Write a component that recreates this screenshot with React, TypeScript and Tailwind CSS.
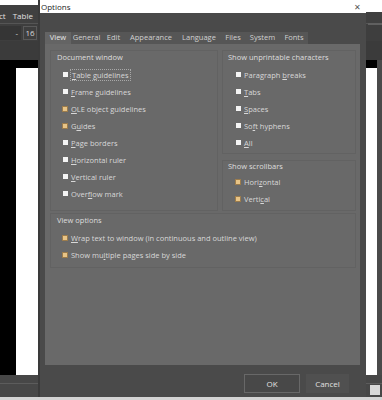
import React from "react";

function Box({ checked }: { checked?: boolean }) {
  return checked ? (
    <span className="inline-block w-[6px] h-[6px] shrink-0 bg-[#e8c486] border border-[#9c7c4c]" />
  ) : (
    <span className="inline-block w-[5px] h-[5px] shrink-0 bg-[#f4f4f4] mx-[0.5px]" />
  );
}

function Item({
  children,
  checked,
  focus,
  h = "h-[17px]",
}: {
  children: React.ReactNode;
  checked?: boolean;
  focus?: boolean;
  h?: string;
}) {
  return (
    <div className={`flex items-center gap-[1px] ${h}`}>
      <Box checked={checked} />
      <span
        className={
          focus
            ? "ml-[1px] border border-dotted border-[#a8a8a8] px-[1px] leading-[10px]"
            : "px-[2px] leading-[10px]"
        }
      >
        {children}
      </span>
    </div>
  );
}

function U({ children }: { children: React.ReactNode }) {
  return <span className="underline underline-offset-[1px]">{children}</span>;
}

export default function App() {
  const tabs: [string, string][] = [
    ["View", "w-[26px]"],
    ["General", "w-[31px]"],
    ["Edit", "w-[23px]"],
    ["Appearance", "w-[52px]"],
    ["Language", "w-[44px]"],
    ["Files", "w-[24px]"],
    ["System", "w-[35px]"],
    ["Fonts", "w-[28px]"],
  ];
  return (
    <div className="relative w-[382px] h-[400px] overflow-hidden bg-[#3c3c3c] font-['Open_Sans',sans-serif] text-[7.5px] text-[#d8d8d8]">
      {/* background application */}
      <div className="flex flex-col h-full">
        <div className="h-[5px] bg-white" />
        <div className="h-[18px] bg-[#404040] flex items-end pb-[1px] text-[8px] text-[#e0e0e0]">
          <span className="ml-[-1px]">ct</span>
          <span className="ml-[7px]">Table</span>
        </div>
        <div className="h-[1px] bg-[#555]" />
        <div className="h-[17px] bg-[#3e3e3e] flex items-center text-[8px]">
          <div className="w-[21px] h-[14px] flex items-center justify-end pr-[3px] bg-[#353535]">-</div>
          <div className="ml-[2px] w-[14px] h-[14px] border border-[#5a5a5a] flex items-center justify-center">16</div>
        </div>
        <div className="h-[19px] bg-[#3b3b3b]" />
        <div className="h-[315px] bg-black flex">
          <div className="ml-[16px] mt-[8px] w-[361px] bg-white" />
          <div className="flex-1 bg-[#4a4a4a]" />
        </div>
        <div className="flex-1 bg-[#474747] flex flex-col relative">
          <div className="mt-[8px] h-[1px] bg-[#5c5c5c]" />
          <div className="absolute right-[2px] top-[10px] w-[10px] h-[10px] bg-[#d8d8d8]" />
        </div>
      </div>

      {/* top strip right of dialog */}
      <div className="absolute right-0 top-0 w-[16px] h-[12px] bg-white" />
      <div className="absolute right-0 top-[23px] w-[14px] h-[2px] bg-[#606060]" />

      {/* dialog */}
      <div className="absolute left-[38px] top-0 w-[328px] h-[397px] flex flex-col bg-[#4a4a4a] border-l-2 border-[#3a3a3a]">
        <div className="h-[13px] bg-white flex items-center justify-between pl-[1px] pr-[5px] text-[#1e1e1e] text-[8px]">
          <span>Options</span>
          <span className="text-[#555] text-[8px]">✕</span>
        </div>
        <div className="flex-1 flex flex-col pl-[5px] pr-[6px] pt-[19px]">
          <div className="flex h-[12px]">
            {tabs.map(([t, w], i) => (
              <div
                key={t}
                className={`${w} h-full flex items-center justify-center ${
                  i === 0 ? "bg-[#646464] text-[#e6e6e6]" : "bg-[#565656] text-[#d0d0d0]"
                }`}
              >
                {t}
              </div>
            ))}
          </div>
          <div className="h-[321px] bg-[#696969] pl-[5px] pr-[4px] pt-[6px] flex flex-col">
            <div className="flex gap-[4px]">
              <div className="w-[168px] h-[161px] border border-[#626262] flex flex-col">
                <div className="h-[13px] leading-[13px] pl-[6px] text-[#dedede]">Document window</div>
                <div className="mt-[2px] pl-[11px]">
                  <Item focus><U>T</U>able guidelines</Item>
                  <Item><U>F</U>rame guidelines</Item>
                  <Item checked><U>O</U>LE object guidelines</Item>
                  <Item checked>G<U>u</U>ides</Item>
                  <Item><U>P</U>age borders</Item>
                  <Item><U>H</U>orizontal ruler</Item>
                  <Item><U>V</U>ertical ruler</Item>
                  <Item>Over<U>f</U>low mark</Item>
                </div>
              </div>
              <div className="w-[134px] flex flex-col gap-[6px]">
                <div className="h-[104px] border border-[#626262] flex flex-col">
                  <div className="h-[13px] leading-[13px] pl-[5px] text-[#dedede]">Show unprintable characters</div>
                  <div className="mt-[2px] pl-[12px]">
                    <Item>Paragraph <U>b</U>reaks</Item>
                    <Item><U>T</U>abs</Item>
                    <Item><U>S</U>paces</Item>
                    <Item>So<U>f</U>t hyphens</Item>
                    <Item><U>A</U>ll</Item>
                  </div>
                </div>
                <div className="h-[51px] border border-[#626262] flex flex-col">
                  <div className="h-[11px] leading-[11px] pl-[5px] text-[#dedede]">Show scrollbars</div>
                  <div className="mt-[2px] pl-[12px]">
                    <Item checked h="h-[16.5px]">Hori<U>z</U>ontal</Item>
                    <Item checked h="h-[16.5px]">Verti<U>c</U>al</Item>
                  </div>
                </div>
              </div>
            </div>
            <div className="mt-[2px] h-[55px] border border-[#626262] flex flex-col">
              <div className="h-[13px] leading-[13px] pl-[6px] text-[#dedede]">View options</div>
              <div className="mt-[2px] pl-[11px]">
                <Item checked><U>W</U>rap text to window (in continuous and outline view)</Item>
                <Item checked>Show mu<U>l</U>tiple pages side by side</Item>
              </div>
            </div>
          </div>
          <div className="flex mt-[9px] pl-[199px] gap-[6px] text-[8px]">
            <div className="w-[56px] h-[19px] border border-[#686868] bg-[#484848] flex items-center justify-center text-[#e0e0e0]">OK</div>
            <div className="w-[43px] h-[19px] bg-[#505050] flex items-center justify-center text-[#e0e0e0]">Cancel</div>
          </div>
        </div>
      </div>

      <div className="absolute left-0 bottom-0 w-full h-[3px] bg-[#d4d4d4]" />
    </div>
  );
}
